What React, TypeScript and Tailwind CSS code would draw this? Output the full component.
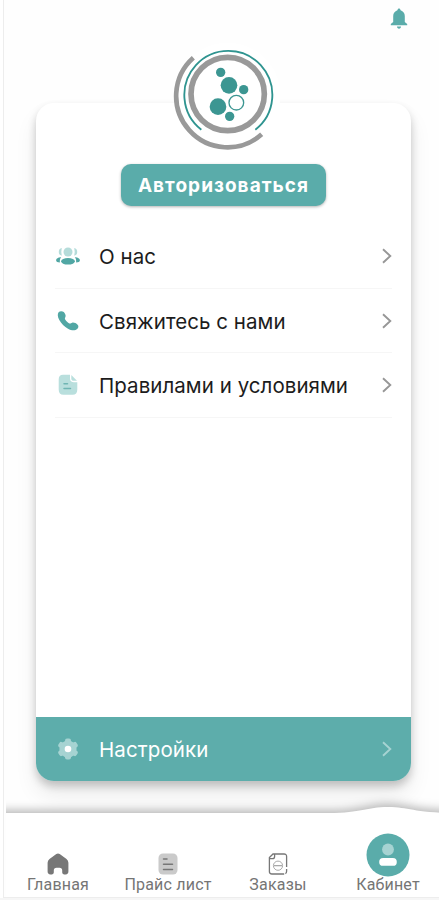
import type { ReactNode } from 'react';

const Logo = () => (
  <svg viewBox="0 0 360 360" className="w-[120px] h-[120px]" fill="none">
    <circle cx="188" cy="166" r="158" fill="#fff" />
    <circle cx="188" cy="162" r="110" stroke="#999" strokeWidth="17" />
    <path d="M109 269A132 132 0 1 1 271 269" stroke="#2f9490" strokeWidth="5.5" />
    <path d="M85 53A151 151 0 0 0 290 283" stroke="#999" strokeWidth="14" />
    <g fill="#3c9692">
      <circle cx="167" cy="97" r="14" />
      <circle cx="192" cy="136" r="25" />
      <circle cx="236" cy="149" r="14" />
      <circle cx="159" cy="200" r="25" />
      <circle cx="194" cy="229" r="14" />
    </g>
    <circle cx="214" cy="188" r="22" stroke="#3c9692" strokeWidth="4" />
  </svg>
);

const BellIcon = () => (
  <svg viewBox="0 0 18 22" className="w-[18px] h-[22px]" fill="#5aacaa">
    <path d="M9 0.6C9.8 .6 10.3 1.2 10.6 2.2C13.2 3.2 14.8 5 14.8 8V14L17.2 16V17.3H.8V16L3.2 14V8C3.2 5 4.8 3.2 7.4 2.2C7.7 1.2 8.2.6 9 .6Z" />
    <path d="M7 18.6H11C11 19.9 10.1 20.7 9 20.7S7 19.9 7 18.6Z" />
  </svg>
);

const PeopleIcon = () => (
  <svg viewBox="0 0 24 20" className="w-6 h-5">
    <g fill="#b5dcda">
      <circle cx="12" cy="6" r="4.5" />
      <path d="M5.8 2.1A3.9 3.9 0 0 0 5.8 9.7Q4.8 6 5.8 2.1Z" />
      <path d="M18.2 2.1A3.9 3.9 0 0 1 18.2 9.7Q19.2 6 18.2 2.1Z" />
    </g>
    <g fill="#51a7a4">
      <ellipse cx="12" cy="15.3" rx="6.9" ry="3.3" />
      <path d="M5.2 11.2C2.4 11 .1 12.4.1 14.2C.1 15.7 1.6 16.4 3.9 16.5C3.7 14.3 4 12.6 5.2 11.2Z" />
      <path d="M18.8 11.2C21.6 11 23.9 12.4 23.9 14.2C23.9 15.7 22.4 16.4 20.1 16.5C20.3 14.3 20 12.6 18.8 11.2Z" />
    </g>
  </svg>
);

const PhoneIcon = () => (
  <svg viewBox="0 0 22 22" className="w-[22px] h-[22px]" fill="#51a7a4">
    <path d="M1.6 2.2C2.8 .8 5.5.8 6.8 2.1C8.2 3.7 9 5.4 8.5 6.8C8.1 8 7.5 8.4 8.2 9.5C9.2 11.2 10.8 12.5 12.4 13.4C13.5 14 14 13 15.2 12.7C16.8 12.3 19.2 13.3 20.6 14.8C21.9 16.1 21.5 17.9 20.2 19.1C18 21 14.3 20.6 11 18.7C7.5 16.7 4.2 13.6 2.3 10C.6 6.8 .3 3.8 1.6 2.2Z" />
  </svg>
);

const DocIcon = () => (
  <svg viewBox="0 0 20 22" className="w-5 h-[22px]">
    <path d="M5 .7H12V4.5C12 7 13.5 8.3 16 8.3H19.3V15.5C19.3 19 17.8 20.7 14.5 20.7H5.5C2.2 20.7.7 19 .7 15.5V5.5C.7 2.2 2 .7 5 .7Z" fill="#b9dfdd" />
    <path d="M13.3 1.1L19 6.8H16C14.1 6.8 13.3 6 13.3 4.2Z" fill="#b9dfdd" />
    <path d="M6 9.7H9.5M6 14.5H12.5" stroke="#6fb5b3" strokeWidth="1.5" strokeLinecap="round" />
  </svg>
);

const GearIcon = () => (
  <svg viewBox="0 0 22 22" className="w-[22px] h-[22px]">
    <g fill="#a6d3d2">
      <circle cx="11" cy="11" r="8.6" />
      <rect x="8" y=".5" width="6" height="21" rx="2" />
      <rect x="8" y=".5" width="6" height="21" rx="2" transform="rotate(60 11 11)" />
      <rect x="8" y=".5" width="6" height="21" rx="2" transform="rotate(120 11 11)" />
    </g>
    <circle cx="11" cy="11" r="3.3" fill="#fff" />
  </svg>
);

const Chevron = ({ color }: { color: string }) => (
  <svg viewBox="0 0 10 16" className="w-2.5 h-4" fill="none">
    <path d="M1 1.2L8.3 8L1 14.8" stroke={color} strokeWidth="1.9" />
  </svg>
);

const HomeIcon = () => (
  <svg viewBox="0 0 22 22" className="w-[22px] h-[22px]" fill="#777">
    <path d="M9.3 1.1Q11 0 12.7 1.1L19.5 6.1Q21.4 7.5 21.4 9.8V18.6Q21.4 21.4 18.6 21.4H17Q15.2 21.4 15.2 19.6V17.5Q15.2 14.8 12.5 14.8H9.5Q6.8 14.8 6.8 17.5V19.6Q6.8 21.4 5 21.4H3.4Q.6 21.4 .6 18.6V9.8Q.6 7.5 2.5 6.1Z" />
  </svg>
);

const PriceIcon = () => (
  <svg viewBox="0 0 20 22" className="w-5 h-[22px]">
    <rect x=".5" y=".5" width="19" height="21" rx="4.5" fill="#cacaca" />
    <path d="M5.5 6H9M5.5 11.2H14.5M5.5 16.5H14.5" stroke="#777" strokeWidth="1.5" strokeLinecap="round" />
  </svg>
);

const OrdersIcon = () => (
  <svg viewBox="0 0 20 22" className="w-5 h-[22px]" fill="none" stroke="#777" strokeWidth="1.3">
    <path d="M18.6 14V3.5Q18.6 1 16 1H5L1.4 4.6V18.5Q1.4 21 4 21H16.2" />
    <path d="M6.6 1V3.4Q6.6 5.6 4.4 5.6H1.4M18.6 16V18.2Q18.6 20 17.4 20.6" />
    <circle cx="10" cy="12.7" r="4.6" stroke="#aaa" strokeWidth="1" />
    <path d="M6 12.7H14" stroke="#999" strokeWidth="1.1" />
  </svg>
);

const UserIcon = () => (
  <svg viewBox="0 0 44 44" className="w-11 h-11 -mb-0.5">
    <circle cx="22" cy="22" r="21.5" fill="#5aacaa" />
    <circle cx="22" cy="16.5" r="5.9" fill="#a6d3d2" />
    <rect x="13.2" y="25" width="17.6" height="7.8" rx="3.9" fill="#fff" />
  </svg>
);

const menu = [
  { label: 'О нас', icon: <PeopleIcon /> },
  { label: 'Свяжитесь с нами', icon: <PhoneIcon /> },
  { label: 'Правилами и условиями', icon: <DocIcon /> },
];

const NavItem = ({ icon, label }: { icon: ReactNode; label: string }) => (
  <div className="flex flex-col items-center justify-end w-[110px] shrink-0">
    {icon}
    <span className="text-[16px] leading-[20px] tracking-[0.2px] whitespace-nowrap">{label}</span>
  </div>
);

export default function App() {
  return (
    <div className="w-[439px] h-[900px] overflow-hidden bg-[#f6f6f6]">
      <div className="relative flex flex-col h-[898px] pl-[3px] bg-white font-['Inter',sans-serif]">
        <div className="flex flex-col h-full border-l border-b border-[#ededed] bg-[#fefefe]">
          <header className="flex justify-end h-[103px] shrink-0 pt-2 pr-[31px]">
            <BellIcon />
          </header>

          <main className="relative flex flex-col shrink-0 w-[375px] h-[678px] ml-8 rounded-[18px] bg-white shadow-[0_5px_9px_rgba(0,0,0,0.2),0_14px_22px_rgba(0,0,0,0.08)]">
            <div className="absolute left-[129px] -top-[63px]">
              <Logo />
            </div>

            <button className="self-center mt-[61px] w-[205px] h-[42px] shrink-0 rounded-[10px] bg-[#5aacaa] text-white font-bold text-[19px] tracking-[1.05px] pt-0.5 shadow-[0_1px_3px_rgba(0,0,0,0.3)]">
              Авторизоваться
            </button>

            <ul className="mt-[18px] px-[19px]">
              {menu.map((item) => (
                <li key={item.label} className="flex items-center h-[64.7px] border-b border-[#f6f6f6]">
                  <span className="flex justify-center w-[26px] shrink-0">{item.icon}</span>
                  <span className="ml-[18px] pt-[3px] flex-1 text-[20.5px] tracking-[0.05px] text-[#1c1c1c] whitespace-nowrap">{item.label}</span>
                  <Chevron color="#979797" />
                </li>
              ))}
            </ul>

            <div className="mt-auto flex items-center h-16 px-[19px] rounded-b-[18px] bg-[#5dadab] text-white">
              <span className="flex justify-center w-[26px] shrink-0"><GearIcon /></span>
              <span className="ml-[18px] pt-[3px] flex-1 text-[20.5px] tracking-[0.1px]">Настройки</span>
              <Chevron color="#a6d3d2" />
            </div>
          </main>

          <nav className="relative mt-auto flex h-[92px] shrink-0 pb-[2px] font-['Roboto',sans-serif] text-[#757575] [clip-path:inset(-24px_0_0_2px)]">
            {/* bar with a hump over the active tab */}
            <svg viewBox="0 0 435 92" className="absolute left-0 bottom-0 w-full h-[92px] overflow-visible drop-shadow-[0_-3px_5px_rgba(0,0,0,0.28)]">
              <path d="M-20 8H325C358 8 362 2 384 2S408 8 455 8V92H-20Z" fill="#fff" />
            </svg>
            <div className="relative flex w-full -ml-px">
              <NavItem icon={<HomeIcon />} label="Главная" />
              <NavItem icon={<PriceIcon />} label="Прайс лист" />
              <NavItem icon={<OrdersIcon />} label="Заказы" />
              <NavItem icon={<UserIcon />} label="Кабинет" />
            </div>
          </nav>
        </div>
      </div>
    </div>
  );
}
